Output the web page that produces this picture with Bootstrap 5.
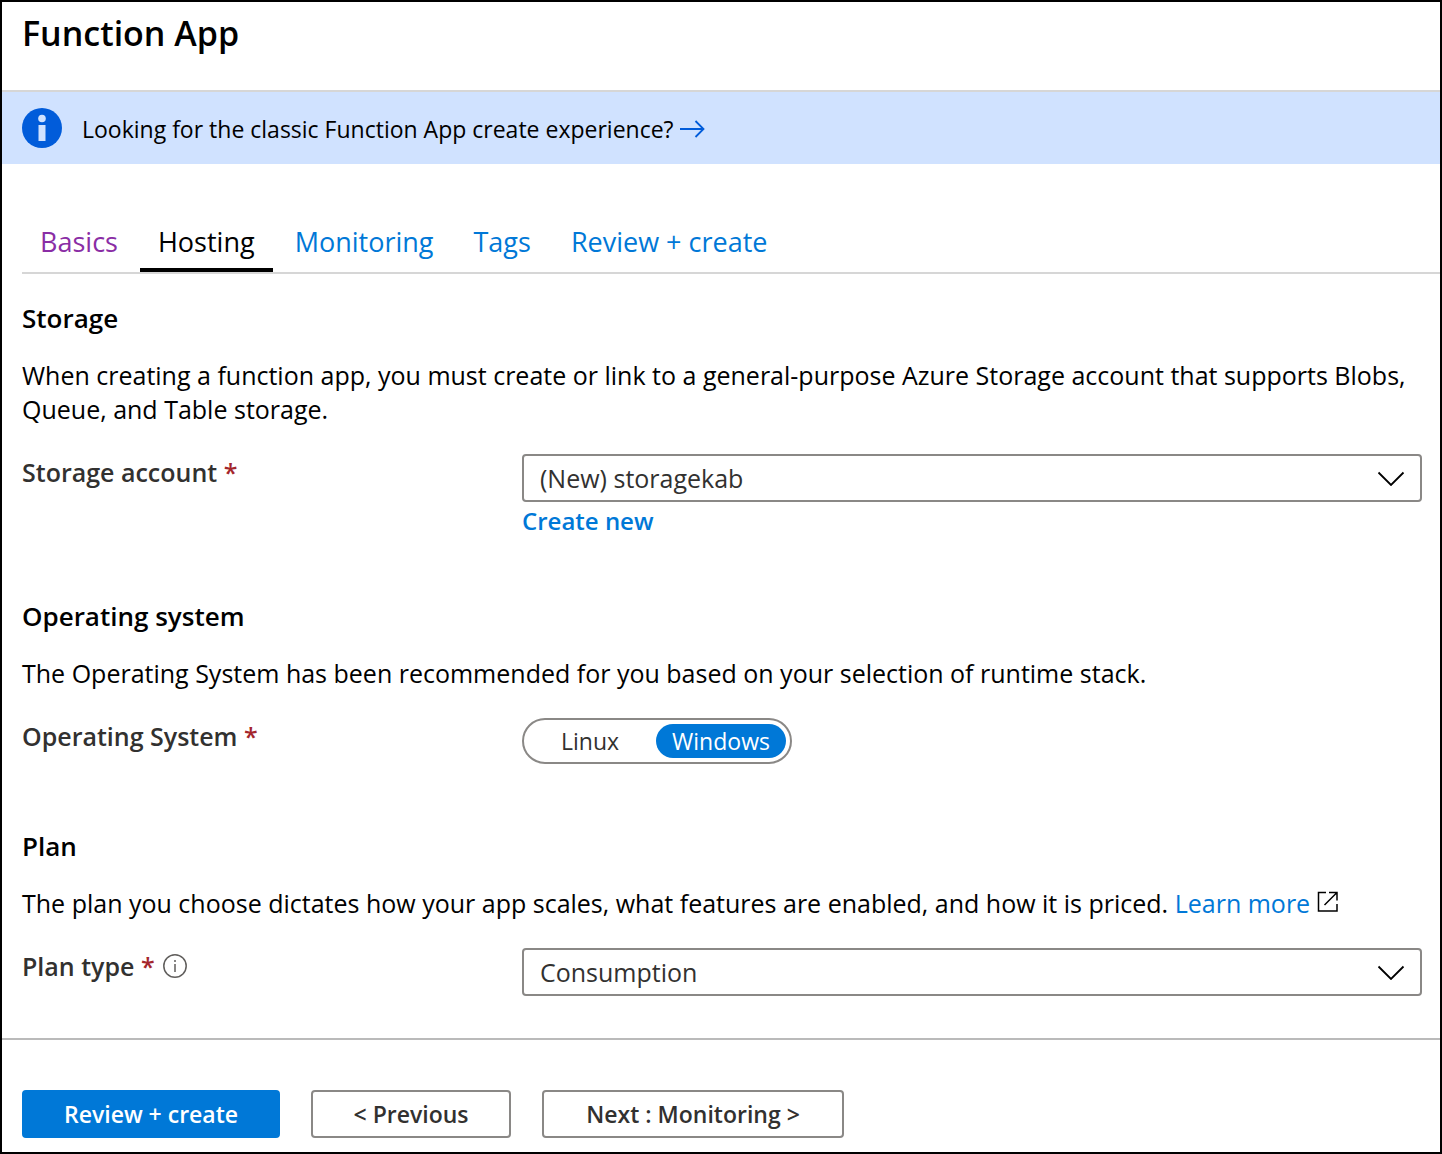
<!DOCTYPE html>
<html lang="en">
<head>
<meta charset="utf-8">
<meta name="viewport" content="width=device-width, initial-scale=1">
<title>Function App</title>
<link href="https://cdn.jsdelivr.net/npm/bootstrap@5.3.0/dist/css/bootstrap.min.css" rel="stylesheet">
<style>
  :root { --az-blue: #0078d7; --az-ink: #323130; --az-line: #8a8886; }
  body { font-family: "Open Sans", "Noto Sans", sans-serif; font-size: 25px; line-height: 34px; color: #000; background: #fff; }
  a { color: var(--az-blue); text-decoration: none; }
  .az-frame { min-height: 100vh; border: 2px solid #000; }
  .az-head { padding: 8px 20px 34px; border-bottom: 2px solid #d6d6d6; }
  .az-head h1 { font-size: 34px; line-height: 46px; font-weight: 600; }
  .az-banner { min-height: 72px; padding: 16px 20px; gap: 20px; background: #d0e2ff; font-size: 23px; }
  .az-banner-text { gap: 6px; padding-top: 4px; }
  .az-tabs { margin: 48px 0 27px 20px; gap: 4px; border-bottom: 2px solid #d6d6d6; }
  .az-tabs .nav-link { padding: 12px 18px 8px; border-bottom: 4px solid transparent; font-size: 27px; line-height: 36px; color: var(--az-blue); }
  .az-tabs .nav-link.az-seen { color: #8a2da5; }
  .az-tabs .nav-link.active { color: #000; border-bottom-color: #000; }
  .az-section { padding: 0 18px 0 20px; margin-bottom: 61px; }
  .az-section:last-of-type { margin-bottom: 40px; }
  .az-section h2 { font-size: 26px; line-height: 34px; font-weight: 600; margin-bottom: 23px; }
  .az-section p { margin-bottom: 28px; }
  .az-field { min-height: 50px; }
  .az-label { flex: 0 0 500px; line-height: 36px; font-weight: 600; color: var(--az-ink); }
  .az-req { color: #a4262c; }
  .az-strong { font-size: 24px; font-weight: 600; margin-top: 2px; }
  .az-select.form-select {
    height: 48px; padding: 0 64px 0 16px; border: 2px solid var(--az-line); border-radius: 4px;
    font-size: 25px; line-height: 34px; color: var(--az-ink);
    background-image: url("data:image/svg+xml,%3Csvg xmlns='http://www.w3.org/2000/svg' viewBox='0 0 28 16'%3E%3Cpath d='M1.500 2.500 14 15 26.500 2.500' fill='none' stroke='%23000' stroke-width='1.800'/%3E%3C/svg%3E");
    background-size: 28px 16px; background-position: right 15px center;
  }
  .az-switch { padding: 4px; gap: 4px; border: 2px solid var(--az-line); border-radius: 23px; }
  .az-switch .btn { min-width: 124px; height: 34px; padding: 0 14px; border: 0; border-radius: 17px; font-size: 23px; line-height: 34px; color: var(--az-ink); }
  .az-switch .btn-check:checked + .btn { min-width: 130px; background: var(--az-blue); color: #fff; }
  .az-foot { padding: 50px 20px 14px; gap: 31px; border-top: 2px solid #bababa; }
  .az-foot .btn { height: 48px; padding: 0 40px; border: 2px solid var(--az-line); border-radius: 4px; font-size: 23px; line-height: 34px; font-weight: 600; color: var(--az-ink); }
  .az-foot .az-primary { min-width: 258px; background: var(--az-blue); border-color: var(--az-blue); color: #fff; }
  .az-prev { min-width: 200px; }
  .az-next { min-width: 302px; }
</style>
</head>
<body>
<div class="az-frame d-flex flex-column">
  <header class="az-head"><h1 class="mb-0">Function App</h1></header>

  <div class="az-banner d-flex align-items-start">
    <svg class="flex-shrink-0" width="40" height="40" viewBox="0 0 40 40" aria-hidden="true">
      <circle cx="20" cy="20" r="20" fill="#015cda"/>
      <circle cx="20" cy="10.500" r="3.800" fill="#d0e2ff"/>
      <path d="M16.500 17h7v16h-7z" fill="#d0e2ff"/>
    </svg>
    <div class="az-banner-text d-flex align-items-center">
      <span>Looking for the classic Function App create experience?</span>
      <a href="#" class="d-flex" aria-label="Open the classic create experience">
        <svg width="25" height="18" viewBox="0 0 25 18" fill="none" stroke="#015cda" stroke-width="1.800" aria-hidden="true"><path d="M0 9h23.500M15.500 1l8 8-8 8"/></svg>
      </a>
    </div>
  </div>

  <nav class="az-tabs nav" aria-label="Steps">
    <a class="nav-link az-seen" href="#">Basics</a>
    <a class="nav-link active" aria-current="page" href="#">Hosting</a>
    <a class="nav-link" href="#">Monitoring</a>
    <a class="nav-link" href="#">Tags</a>
    <a class="nav-link" href="#">Review + create</a>
  </nav>

  <main>
    <section class="az-section">
      <h2>Storage</h2>
      <p>When creating a function app, you must create or link to a general-purpose Azure Storage account that supports Blobs, Queue, and Table storage.</p>
      <div class="az-field d-flex align-items-start">
        <label class="az-label" for="storage">Storage account <span class="az-req">*</span></label>
        <div class="d-flex flex-column align-items-start flex-grow-1">
          <select class="az-select form-select" id="storage"><option>(New) storagekab</option></select>
          <a class="az-strong" href="#">Create new</a>
        </div>
      </div>
    </section>

    <section class="az-section">
      <h2>Operating system</h2>
      <p>The Operating System has been recommended for you based on your selection of runtime stack.</p>
      <div class="az-field d-flex align-items-start">
        <div class="az-label" id="os-label">Operating System <span class="az-req">*</span></div>
        <div class="az-switch d-flex" role="radiogroup" aria-labelledby="os-label">
          <input class="btn-check" type="radio" name="os" id="os-linux"><label class="btn" for="os-linux">Linux</label>
          <input class="btn-check" type="radio" name="os" id="os-windows" checked><label class="btn" for="os-windows">Windows</label>
        </div>
      </div>
    </section>

    <section class="az-section">
      <h2>Plan</h2>
      <p>The plan you choose dictates how your app scales, what features are enabled, and how it is priced. <a href="#">Learn more
        <svg class="align-baseline" width="22" height="22" viewBox="0 0 22 22" fill="none" stroke="#000" stroke-width="1.500" aria-hidden="true"><path d="M9 1.500H1.500v18.500H20v-7M12 1.500h8v8M20 1.500 7.500 14"/></svg></a></p>
      <div class="az-field d-flex align-items-start">
        <div class="az-label d-flex align-items-center gap-2">
          <label for="plan">Plan type <span class="az-req">*</span></label>
          <svg width="24" height="24" viewBox="0 0 24 24" fill="none" stroke="#605e5c" aria-hidden="true"><circle cx="12" cy="12" r="11.200" stroke-width="1.500"/><path d="M12 10v8M12 6v2" stroke-width="1.500"/></svg>
        </div>
        <select class="az-select form-select" id="plan"><option>Consumption</option></select>
      </div>
    </section>
  </main>

  <footer class="az-foot d-flex flex-wrap">
    <button type="button" class="btn az-primary">Review + create</button>
    <button type="button" class="btn az-prev">&lt; Previous</button>
    <button type="button" class="btn az-next">Next : Monitoring &gt;</button>
  </footer>
</div>
<script src="https://cdn.jsdelivr.net/npm/bootstrap@5.3.0/dist/js/bootstrap.bundle.min.js"></script>
</body>
</html>
